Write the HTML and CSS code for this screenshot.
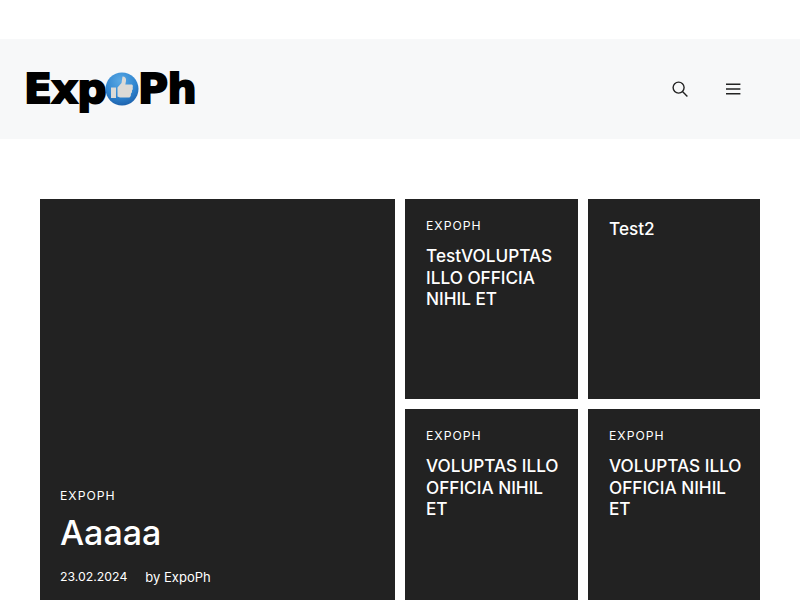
FILE: index.html
```html
<!DOCTYPE html>
<html lang="en">
<head>
  <meta charset="UTF-8" />
  <title>ExpoPh</title>
  <meta name="viewport" content="width=device-width, initial-scale=1.0" />
  <link rel="stylesheet" href="styles.css">
</head>
<body>
  <!-- Site header -->
  <header class="site-header">
    <a class="logo" href="#">
      <span>Exp</span>
      <svg class="logo-badge" width="34" height="34" viewBox="0 0 34 34" aria-hidden="true">
        <defs>
          <radialGradient id="ball" cx="45%" cy="25%" r="80%">
            <stop offset="0" stop-color="#5aa9e4" />
            <stop offset="0.6" stop-color="#2f85d0" />
            <stop offset="1" stop-color="#1c5ea8" />
          </radialGradient>
        </defs>
        <circle cx="17" cy="17" r="16.5" fill="url(#ball)" />
        <rect x="6" y="15.5" width="5" height="10.5" fill="#dcdad6" />
        <path d="M12.5 15.5 L16.5 11 L17.5 4.5 Q21.5 4.5 21 9 L20.3 12.5 L27 12.5 Q28.5 13.5 27.7 15.5 Q28.3 17.5 27 18.6 Q27.5 20.5 26 21.6 Q26.3 24 24.5 25.5 L15 25.5 L12.5 24.5 Z" fill="#dcdad6" />
      </svg>
      <span>Ph</span>
    </a>
    <nav class="header-icons">
      <button class="icon-btn" aria-label="Search">
        <svg width="16" height="16" viewBox="0 0 16 16" fill="none" stroke="#222" stroke-width="1.4">
          <circle cx="6.6" cy="6.6" r="5.5" />
          <path d="M10.7 10.7 L15.4 15.4" />
        </svg>
      </button>
      <button class="icon-btn" aria-label="Menu">
        <svg width="16" height="16" viewBox="0 0 16 16" fill="none" stroke="#222" stroke-width="1.4">
          <path d="M1 3.2 H15.4 M1 8 H15.4 M1 12.8 H15.4" />
        </svg>
      </button>
    </nav>
  </header>

  <!-- Post grid -->
  <main class="post-grid">
    <article class="post post-large">
      <div class="post-cat">EXPOPH</div>
      <h2 class="post-title-large">Aaaaa</h2>
      <div class="post-meta">
        <span class="post-date">23.02.2024</span>
        <span>by ExpoPh</span>
      </div>
    </article>
    <article class="post">
      <div class="post-cat">EXPOPH</div>
      <h2 class="post-title">TestVOLUPTAS ILLO OFFICIA NIHIL ET</h2>
    </article>
    <article class="post">
      <h2 class="post-title">Test2</h2>
    </article>
    <article class="post">
      <div class="post-cat">EXPOPH</div>
      <h2 class="post-title">VOLUPTAS ILLO OFFICIA NIHIL ET</h2>
    </article>
    <article class="post">
      <div class="post-cat">EXPOPH</div>
      <h2 class="post-title">VOLUPTAS ILLO OFFICIA NIHIL ET</h2>
    </article>
  </main>
</body>
</html>
```

FILE: styles.css
```css
* {
  box-sizing: border-box;
}

body {
  margin: 0;
  padding-top: 39px;
  background: #fff;
  font-family: Inter, "Liberation Sans", sans-serif;
  color: #fff;
  overflow: hidden;
  height: 600px;
}

.site-header {
  height: 100px;
  background: #f7f8f9;
  display: flex;
  align-items: center;
  justify-content: space-between;
  padding: 0 40.5px 0 24px;
}

.logo {
  display: flex;
  align-items: center;
  color: #000;
  text-decoration: none;
  font-family: "DejaVu Sans", sans-serif;
  font-weight: 700;
  font-size: 41px;
  letter-spacing: -0.6px;
  -webkit-text-stroke: 2px #000;
}

.logo-badge {
  margin: 0 -1px 0 -1px;
}

.header-icons {
  display: flex;
}

.icon-btn {
  width: 53px;
  height: 60px;
  padding: 0;
  border: none;
  background: none;
  display: flex;
  align-items: center;
  justify-content: center;
}

.post-grid {
  margin: 60px 40px 0;
  display: grid;
  grid-template-columns: 355px 173px 172px;
  grid-auto-rows: 200px;
  gap: 10px;
}

.post {
  background: #222;
  padding: 19px 14px 20px 21px;
}

.post-large {
  grid-row: span 2;
  padding: 0 20px 23px;
  display: flex;
  flex-direction: column;
  justify-content: flex-end;
}

.post-cat {
  font-size: 12.2px;
  line-height: 14px;
  letter-spacing: 1px;
  margin: 1px 0 12px;
}

.post-title {
  margin: 0;
  font-size: 17.2px;
  line-height: 21.6px;
  font-weight: 500;
}

.post-title-large {
  margin: 0 0 17px;
  font-size: 34px;
  line-height: 36px;
  font-weight: 500;
}

.post-meta {
  display: flex;
  gap: 18px;
  font-size: 13px;
  line-height: 18px;
}

.post-date {
  font-size: 12.3px;
}
```
